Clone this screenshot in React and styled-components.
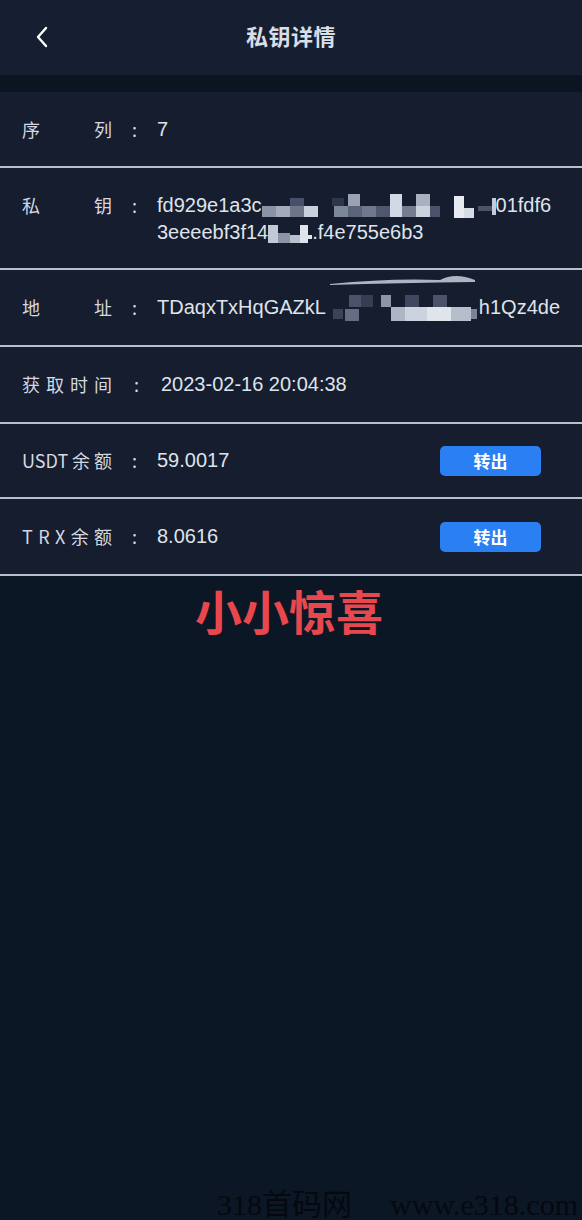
import React from "react";
import styled, { createGlobalStyle } from "styled-components";

const GlobalStyle = createGlobalStyle`
  html, body {
    margin: 0;
    padding: 0;
    background: #0b1724;
  }
  * {
    box-sizing: border-box;
  }
`;

const Page = styled.div`
  width: 582px;
  height: 1220px;
  overflow: hidden;
  display: flex;
  flex-direction: column;
  background: #0b1724;
  font-family: "Liberation Sans", "Noto Sans CJK SC", sans-serif;
`;

const Header = styled.div`
  height: 75px;
  flex: none;
  display: flex;
  align-items: center;
  justify-content: center;
  position: relative;
  background: #161f32;
`;

const BackButton = styled.div`
  position: absolute;
  left: 32px;
  top: 25px;
  width: 20px;
  height: 24px;
  display: flex;
  align-items: center;
  justify-content: center;
`;

const Title = styled.h1`
  margin: 0 0 5px 0;
  font-size: 22px;
  line-height: 30px;
  font-weight: 700;
  color: #d9dde6;
  font-family: "Noto Sans CJK SC", sans-serif;
  letter-spacing: 0.5px;
`;

const Band = styled.div`
  height: 17px;
  flex: none;
  background: #0a1521;
`;

const List = styled.div`
  background: #151d2f;
  flex: none;
`;

const Row = styled.div`
  position: relative;
  display: flex;
  align-items: ${(p) => (p.top ? "flex-start" : "center")};
  min-height: ${(p) => p.h || 77}px;
  padding: ${(p) => (p.top ? "24px" : "0")} 22px 0 22px;
  border-bottom: 2px solid #b7c0cc;
  color: #d8dce4;
  font-size: 20px;
`;

const Label = styled.div`
  width: 90px;
  flex: none;
  display: flex;
  justify-content: space-between;
  font-family: "Noto Sans CJK SC", sans-serif;
  font-size: 18px;
  line-height: 27px;
  color: #d4d8e0;
`;

const Colon = styled.div`
  width: ${(p) => p.w || 45}px;
  flex: none;
  text-align: center;
  font-family: "Noto Sans CJK SC", sans-serif;
  font-size: 18px;
  line-height: 27px;
`;

const Value = styled.div`
  flex: 1;
  min-width: 0;
  line-height: 27px;
  color: #dfe3ea;
  white-space: nowrap;
`;

const Line = styled.div`
  display: flex;
  align-items: center;
`;

const Gap = styled.span`
  display: inline-block;
  width: ${(p) => p.w}px;
`;

const TransferButton = styled.button`
  margin-left: auto;
  margin-right: 19px;
  width: 101px;
  height: 30px;
  border: none;
  border-radius: 5px;
  background: #2a80f3;
  color: #ffffff;
  font-family: "Noto Sans CJK SC", sans-serif;
  font-weight: 700;
  font-size: 17px;
  cursor: pointer;
  padding: 0;
`;

const Surprise = styled.div`
  padding-top: 8px;
  text-align: center;
  font-family: "Noto Sans CJK SC", sans-serif;
  font-weight: 700;
  font-size: 47px;
  line-height: 52px;
  color: #e8474e;
  padding-right: 4px;
`;

const Watermark = styled.div`
  margin-top: auto;
  padding-left: 217px;
  white-space: nowrap;
  font-family: "Liberation Serif", "Noto Sans CJK SC", serif;
  font-size: 30px;
  line-height: 30px;
  color: #05090f;
`;

const Swoosh = styled.svg`
  position: absolute;
  left: 330px;
  top: 4px;
`;

const Mosaic = ({ width, height, cells }) => (
  <svg width={width} height={height} style={{ display: "block", flex: "none" }}>
    {cells.map(([x, y, w, h, c], i) => (
      <rect key={i} x={x} y={y} width={w} height={h} fill={c} />
    ))}
  </svg>
);

const keyCells = [
  [0, 12, 14, 11, "#8a93a6"],
  [14, 12, 14, 11, "#a3abbb"],
  [28, 12, 14, 11, "#6d7689"],
  [28, 4, 14, 8, "#47506a"],
  [42, 12, 14, 11, "#c9cfdc"],
  [70, 4, 12, 8, "#2d364b"],
  [72, 12, 14, 11, "#7d879a"],
  [86, 12, 14, 11, "#5b6479"],
  [86, 0, 12, 12, "#9aa3b4"],
  [100, 12, 14, 11, "#6f788c"],
  [114, 12, 14, 11, "#4e576d"],
  [128, 0, 12, 23, "#d3d9e4"],
  [140, 12, 14, 11, "#737c90"],
  [154, 0, 14, 12, "#a9b1c1"],
  [154, 12, 14, 11, "#cbd1dd"],
  [168, 12, 10, 11, "#4a536a"],
  [192, 2, 10, 22, "#e7ebf1"],
  [202, 14, 10, 10, "#d6dbe5"],
  [216, 12, 14, 5, "#4a536a"],
  [230, 4, 18, 17, "#c3cad8"],
  [248, 4, 6, 12, "#e2e6ee"],
];

const keyCells2 = [
  [0, 4, 10, 18, "#c2c9d6"],
  [10, 12, 12, 10, "#8b95a8"],
  [22, 14, 10, 8, "#b8c0ce"],
  [32, 4, 8, 18, "#dfe3ea"],
  [40, 14, 4, 4, "#dfe3ea"],
];

const addrCells = [
  [0, 16, 10, 10, "#3a4358"],
  [16, 2, 12, 12, "#4a536a"],
  [28, 2, 12, 12, "#343d52"],
  [12, 16, 14, 12, "#646d82"],
  [48, 2, 10, 12, "#8c96a8"],
  [58, 14, 14, 14, "#aeb6c5"],
  [72, 2, 14, 12, "#3f485e"],
  [72, 14, 22, 14, "#cdd3de"],
  [94, 14, 24, 14, "#e0e4eb"],
  [100, 2, 14, 12, "#4a536a"],
  [118, 14, 20, 14, "#b6bdcb"],
  [138, 16, 6, 10, "#7a8397"],
];

const Chevron = () => (
  <svg width="14" height="22" viewBox="0 0 14 22">
    <path
      d="M11 2 L3 11 L11 20"
      fill="none"
      stroke="#ffffff"
      strokeWidth="2.4"
      strokeLinecap="round"
      strokeLinejoin="round"
    />
  </svg>
);

const SpreadLabel = ({ chars }) => (
  <Label>
    {chars.map((c, i) => (
      <span key={i}>{c}</span>
    ))}
  </Label>
);

export default function App() {
  return (
    <>
      <GlobalStyle />
      <Page>
        <Header>
          <BackButton>
            <Chevron />
          </BackButton>
          <Title>私钥详情</Title>
        </Header>
        <Band />
        <List>
          <Row h={76}>
            <SpreadLabel chars={["序", "列"]} />
            <Colon>:</Colon>
            <Value>7</Value>
          </Row>
          <Row h={102} top>
            <SpreadLabel chars={["私", "钥"]} />
            <Colon>:</Colon>
            <Value>
              <Line>
                fd929e1a3c
                <Mosaic width={234} height={24} cells={keyCells} />
                01fdf6
              </Line>
              <Line>
                3eeeebf3f14
                <Mosaic width={44} height={24} cells={keyCells2} />
                .f4e755e6b3
              </Line>
            </Value>
          </Row>
          <Row h={77}>
            <Swoosh width="150" height="14" viewBox="0 0 150 14">
              <path
                d="M0 10 Q60 4 110 6 Q125 -2 145 6 L145 8 Q70 9 0 11 Z"
                fill="#c9d0dc"
                opacity="0.85"
              />
            </Swoosh>
            <SpreadLabel chars={["地", "址"]} />
            <Colon>:</Colon>
            <Value>
              <Line>
                TDaqxTxHqGAZkL
                <Gap w={12} />
                <Mosaic width={146} height={30} cells={addrCells} />
                h1Qz4de
              </Line>
            </Value>
          </Row>
          <Row h={77}>
            <SpreadLabel chars={["获", "取", "时", "间"]} />
            <Colon w={49}>:</Colon>
            <Value>2023-02-16 20:04:38</Value>
          </Row>
          <Row h={75}>
            <SpreadLabel chars={["USDT", "余", "额"]} />
            <Colon>:</Colon>
            <Value>59.0017</Value>
            <TransferButton>转出</TransferButton>
          </Row>
          <Row h={77}>
            <SpreadLabel chars={["T", "R", "X", "余", "额"]} />
            <Colon>:</Colon>
            <Value>8.0616</Value>
            <TransferButton>转出</TransferButton>
          </Row>
        </List>
        <Surprise>小小惊喜</Surprise>
        <Watermark>
          318首码网
          <Gap w={38} />
          www.e318.com
        </Watermark>
      </Page>
    </>
  );
}
